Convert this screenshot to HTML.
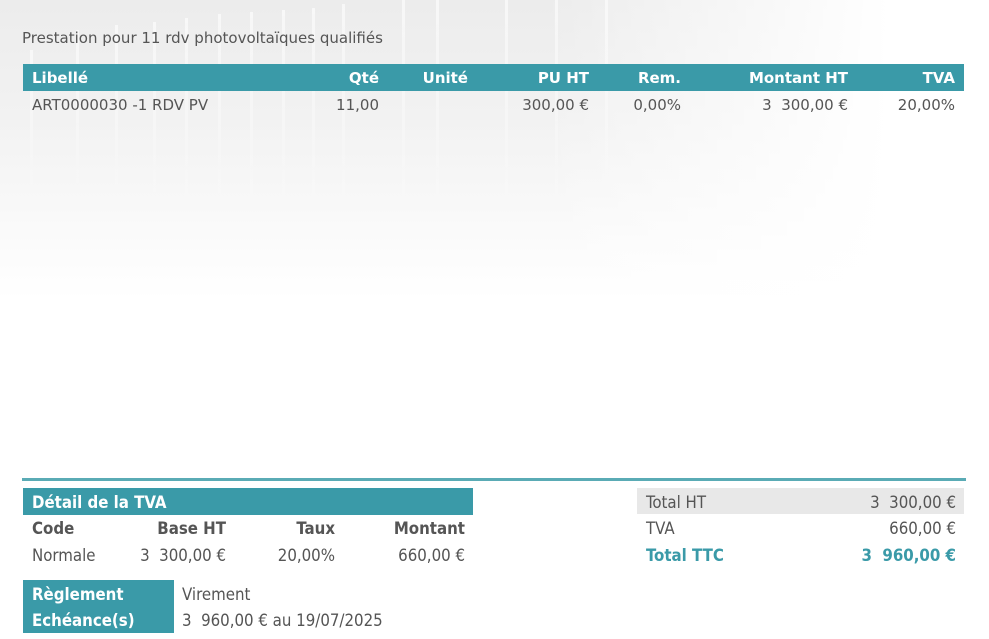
<!DOCTYPE html>
<html><head><meta charset="utf-8"><style>
body{margin:0;width:989px;height:639px;position:relative;overflow:hidden;background:#fff;font-family:"DejaVu Sans","Liberation Sans",sans-serif;color:#555;font-size:15px}
.bg{position:absolute;left:0;top:0;width:989px;height:300px;background:linear-gradient(180deg,#ececec 0%,#f2f2f2 40%,#fff 100%)}
.bg2{position:absolute;left:0;top:0;width:989px;height:300px;background:linear-gradient(90deg,rgba(255,255,255,0) 0%,rgba(255,255,255,0) 55%,#fff 90%)}
.ln{position:absolute;width:3px;background:linear-gradient(180deg,rgba(255,255,255,.6),rgba(255,255,255,0));}
.a{position:absolute;white-space:nowrap;line-height:18px}
.r{text-align:right}
.bar{position:absolute;background:#3a9aa8}
.w{color:#fff;font-weight:bold}
.c{font-family:"DejaVu Sans Condensed","DejaVu Sans",sans-serif;font-stretch:condensed;font-size:16.7px}
</style></head><body>
<div class="bg"></div>
<div class="ln" style="left:30px;top:50px;height:150px"></div>
<div class="ln" style="left:76px;top:30px;height:170px"></div>
<div class="ln" style="left:115px;top:25px;height:180px"></div>
<div class="ln" style="left:153px;top:22px;height:190px"></div>
<div class="ln" style="left:185px;top:18px;height:200px"></div>
<div class="ln" style="left:218px;top:14px;height:200px"></div>
<div class="ln" style="left:250px;top:12px;height:210px"></div>
<div class="ln" style="left:282px;top:10px;height:210px"></div>
<div class="ln" style="left:312px;top:8px;height:220px"></div>
<div class="ln" style="left:342px;top:4px;height:220px"></div>
<div class="ln" style="left:402px;top:0px;height:230px"></div>
<div class="ln" style="left:436px;top:0px;height:230px"></div>
<div class="ln" style="left:505px;top:0px;height:230px"></div>
<div class="ln" style="left:555px;top:0px;height:220px"></div>
<div class="ln" style="left:605px;top:0px;height:200px"></div>
<div class="bg2"></div>

<div class="a" style="left:22px;top:29px">Prestation pour 11 rdv photovoltaïques qualifiés</div>
<div class="bar" style="left:23px;top:64px;width:941px;height:27px"></div>
<div class="a w" style="left:32px;top:69px">Libellé</div>
<div class="a w r" style="right:610px;top:69px">Qté</div>
<div class="a w r" style="right:521px;top:69px">Unité</div>
<div class="a w r" style="right:400px;top:69px">PU HT</div>
<div class="a w r" style="right:308px;top:69px">Rem.</div>
<div class="a w r" style="right:141px;top:69px">Montant HT</div>
<div class="a w r" style="right:34px;top:69px">TVA</div>
<div class="a" style="left:32px;top:96px">ART0000030 -1 RDV PV</div>
<div class="a r" style="right:610px;top:96px">11,00</div>
<div class="a r" style="right:400px;top:96px">300,00 €</div>
<div class="a r" style="right:308px;top:96px">0,00%</div>
<div class="a r" style="right:141px;top:96px">3&nbsp; 300,00 €</div>
<div class="a r" style="right:34px;top:96px">20,00%</div>

<div style="position:absolute;left:22px;top:478px;width:944px;height:3px;background:#5aabb5"></div>

<div class="bar" style="left:23px;top:488px;width:450px;height:27px"></div>
<div class="a w c" style="left:32px;top:493px">Détail de la TVA</div>
<div class="a c" style="left:32px;top:519px;font-weight:bold">Code</div>
<div class="a c r" style="right:763px;top:519px;font-weight:bold">Base HT</div>
<div class="a c r" style="right:654px;top:519px;font-weight:bold">Taux</div>
<div class="a c r" style="right:524px;top:519px;font-weight:bold">Montant</div>
<div class="a c" style="left:32px;top:546px">Normale</div>
<div class="a c r" style="right:763px;top:546px">3&nbsp; 300,00 €</div>
<div class="a c r" style="right:654px;top:546px">20,00%</div>
<div class="a c r" style="right:524px;top:546px">660,00 €</div>

<div class="bar" style="left:23px;top:580px;width:151px;height:53px"></div>
<div class="a w c" style="left:32px;top:585px">Règlement</div>
<div class="a w c" style="left:32px;top:611px">Echéance(s)</div>
<div class="a c" style="left:182px;top:585px">Virement</div>
<div class="a c" style="left:182px;top:611px">3&nbsp; 960,00 € au 19/07/2025</div>

<div style="position:absolute;left:637px;top:488px;width:327px;height:26px;background:#e8e8e8"></div>
<div class="a c" style="left:646px;top:493px">Total HT</div>
<div class="a c r" style="right:33px;top:493px">3&nbsp; 300,00 €</div>
<div class="a c" style="left:646px;top:519px">TVA</div>
<div class="a c r" style="right:33px;top:519px">660,00 €</div>
<div class="a c" style="left:646px;top:546px;color:#3a9aa8;font-weight:bold">Total TTC</div>
<div class="a c r" style="right:33px;top:546px;color:#3a9aa8;font-weight:bold">3&nbsp; 960,00 €</div>
</body></html>
